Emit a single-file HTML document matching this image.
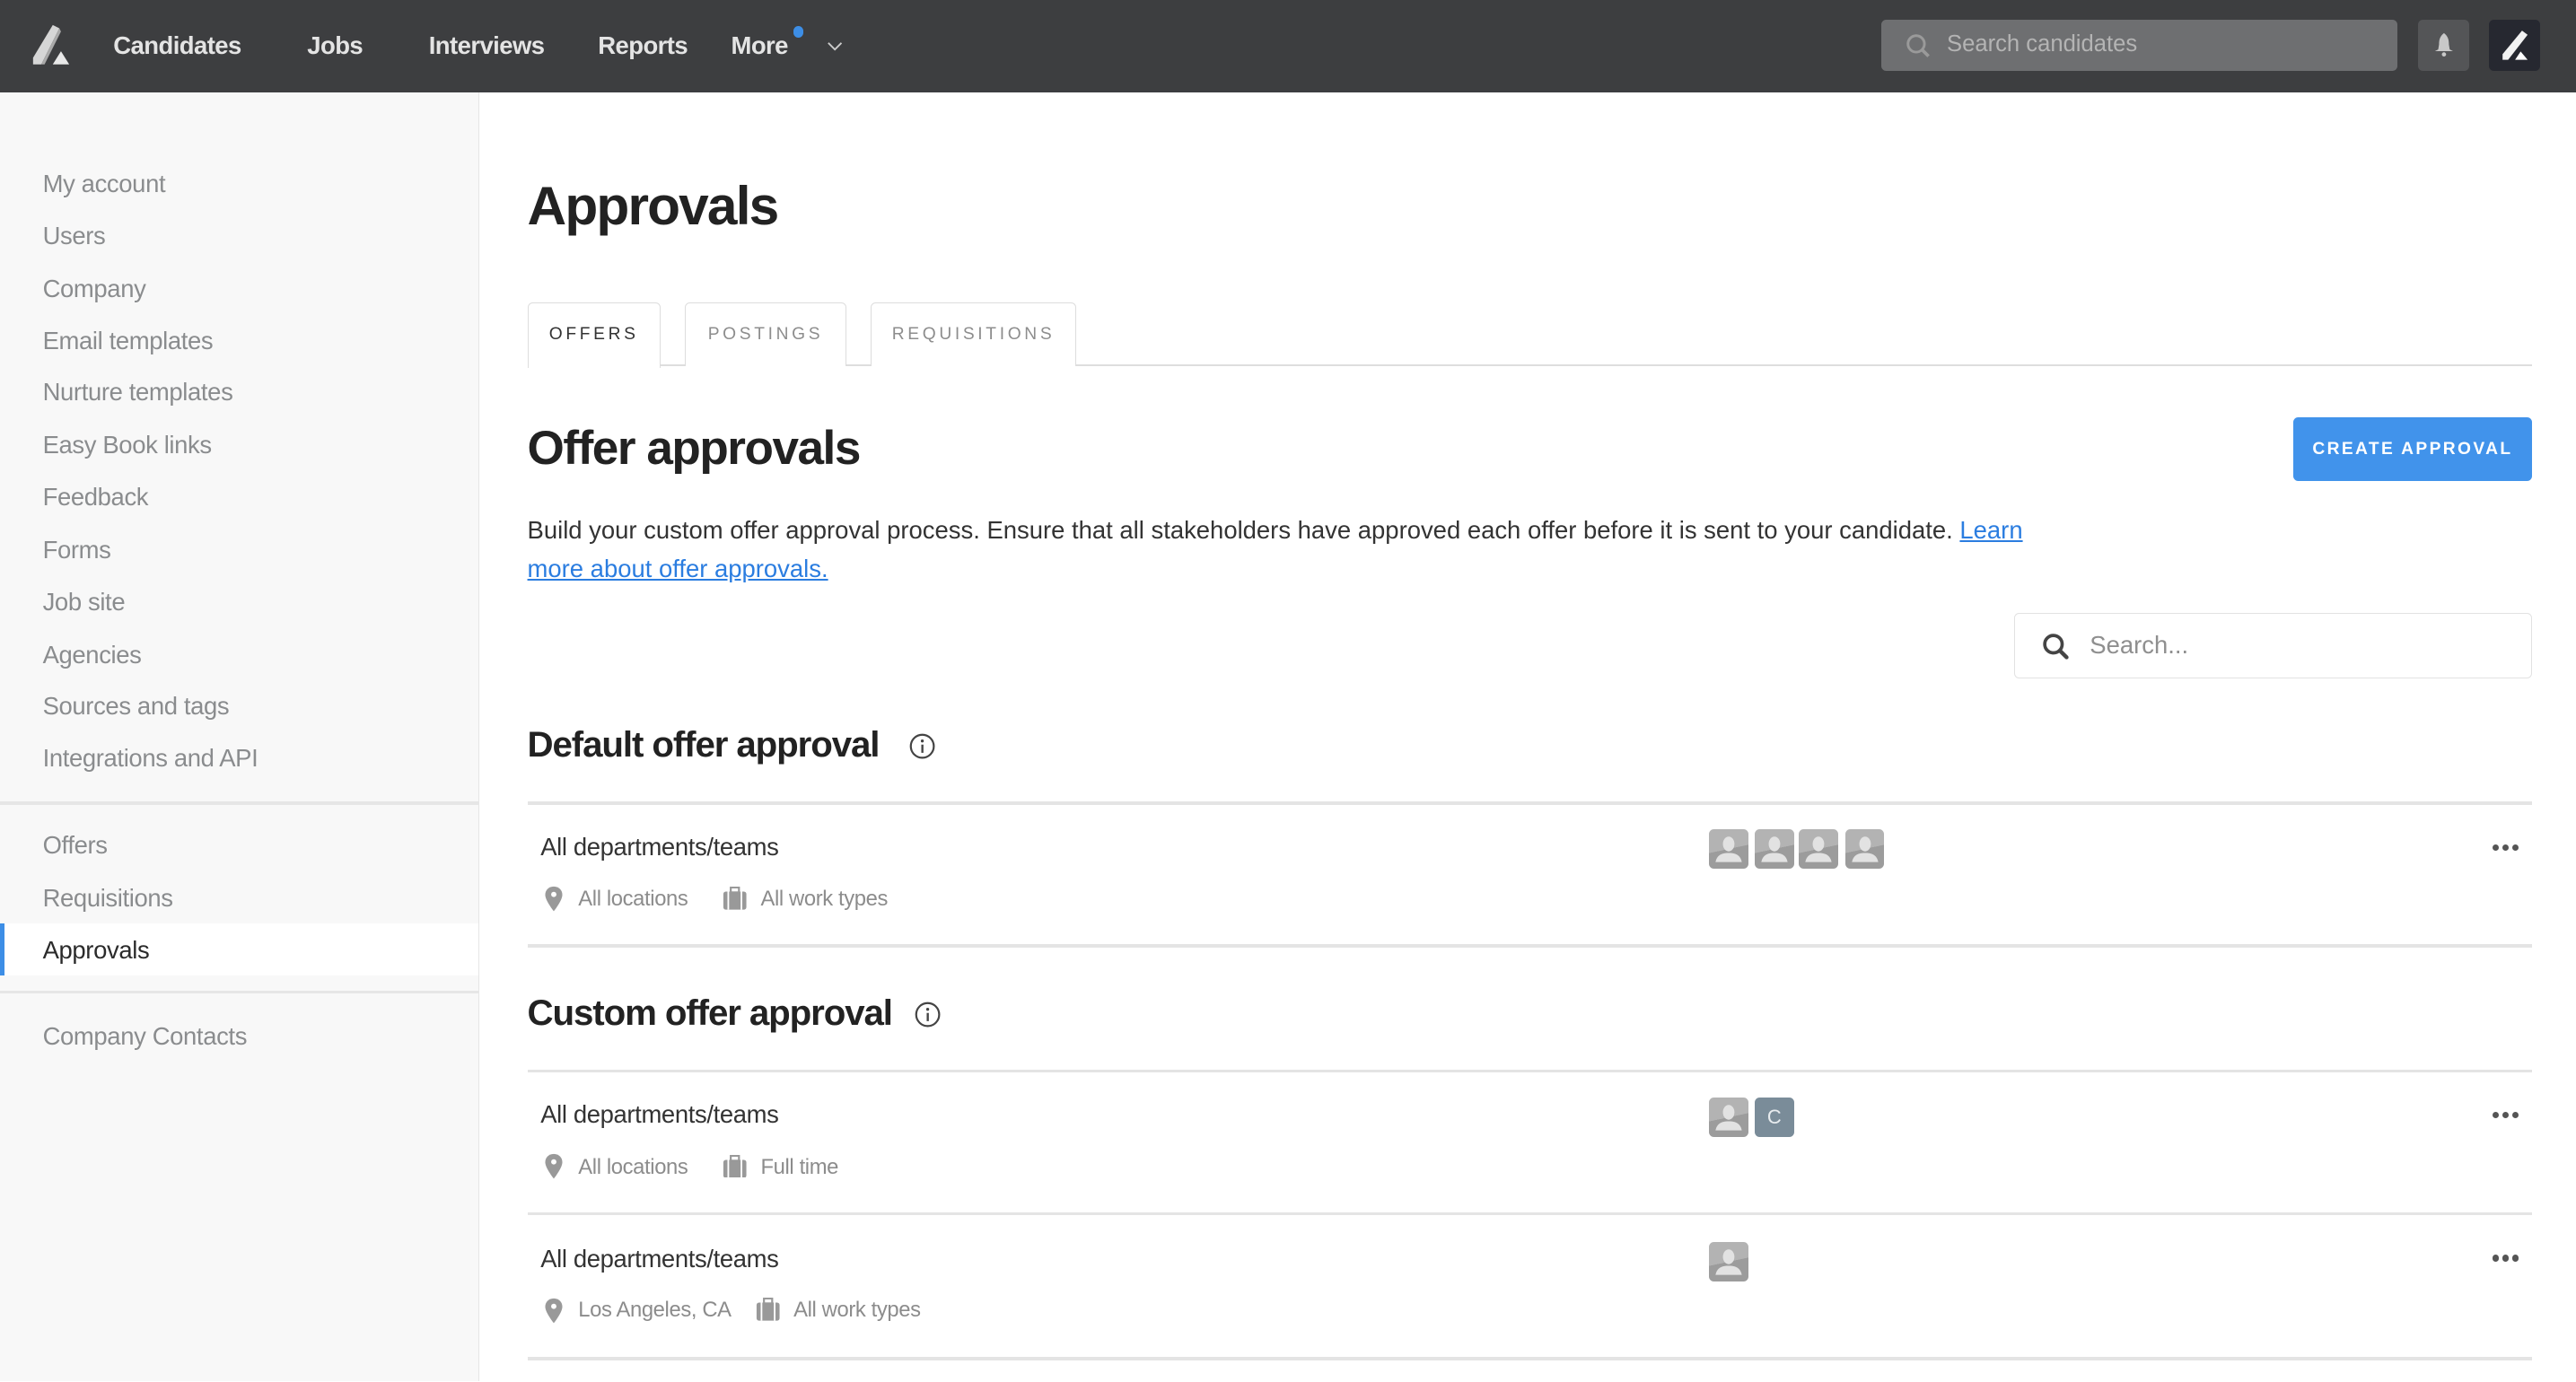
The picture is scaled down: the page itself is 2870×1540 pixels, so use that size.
<!DOCTYPE html>
<html><head><meta charset="utf-8"><style>
html{zoom:1.8304}
*{box-sizing:border-box;margin:0;padding:0}
body{width:1568px;height:841px;overflow:hidden;font-family:"Liberation Sans",sans-serif;background:#fff;position:relative;color:#222}
.a{position:absolute;white-space:nowrap}
#top{position:absolute;left:0;top:0;width:1568px;height:56px;background:#3d3e40}
.nav{position:absolute;top:19px;font-size:15px;font-weight:bold;color:#e4e4e4;letter-spacing:-0.3px}
#side{position:absolute;left:0;top:56px;width:292px;height:785px;background:#f8f8f8;border-right:1px solid #e6e6e6}
.si{position:absolute;left:26px;font-size:15px;color:#8a8c8e;letter-spacing:-0.2px}
.hr{position:absolute;height:1px;background:#dedede}
.tab{position:absolute;top:184px;height:39px;border:1px solid #ddd;border-bottom:none;border-radius:3px 3px 0 0;font-size:10.5px;letter-spacing:2px;color:#8d8d8d;text-align:center;line-height:38px;background:#fff}
.row{font-size:15px;color:#333;letter-spacing:-0.2px}
.meta{font-size:13px;color:#8c8c8c;letter-spacing:-0.2px}
.av{position:absolute;width:24px;height:24px;border-radius:3px;background:linear-gradient(168deg,#b3b3b3 50%,#9c9c9c 50%);overflow:hidden}
.av svg{position:absolute;left:0;top:0}
.dots{position:absolute;font-size:0}
.dots i{display:inline-block;width:4px;height:4px;border-radius:2px;background:#555;margin-right:2px}
</style></head><body>
<div id="top">
<svg class="a" style="left:19px;top:14px" width="26" height="26" viewBox="0 0 26 26"><path d="M13 1 L17 3 L6 25 L1 25 L1 21 Z" fill="#d6d6d6"/><path d="M17 3 L6 25 L8 25 L18 5 Z" fill="#aaa"/><path d="M18 17 L23 25 L13 25 Z" fill="#e8e8e8"/></svg>
<div class="nav" style="left:69px">Candidates</div>
<div class="nav" style="left:187px">Jobs</div>
<div class="nav" style="left:261px">Interviews</div>
<div class="nav" style="left:364px">Reports</div>
<div class="nav" style="left:445px">More</div>
<div class="a" style="left:483px;top:16px;width:6px;height:7px;border-radius:3px;background:#3d8ee6"></div>
<svg class="a" style="left:503px;top:25px" width="10" height="7"><path d="M1 1 L5 5 L9 1" stroke="#ccc" fill="none" stroke-width="1"/></svg>
<div class="a" style="left:1145px;top:12px;width:314px;height:31px;background:#6e6f71;border-radius:3px"></div>
<svg class="a" style="left:1160px;top:20px" width="16" height="16"><circle cx="6.5" cy="6.5" r="5" stroke="#9a9a9a" stroke-width="1.6" fill="none"/><path d="M10 10 L14 14" stroke="#9a9a9a" stroke-width="2"/></svg>
<div class="a" style="left:1185px;top:19px;font-size:14px;color:#b4b4b4">Search candidates</div>
<div class="a" style="left:1472px;top:12px;width:31px;height:31px;background:#545557;border-radius:3px"></div>
<svg class="a" style="left:1481px;top:19px" width="13" height="16"><path d="M6.5 1 C4 3 3.5 5 3.5 8 L3 11 L1 12 L12 12 L10 11 L9.5 8 C9.5 5 9 3 6.5 1Z" fill="#c8c8c8"/><circle cx="6.5" cy="14" r="1.3" fill="#c8c8c8"/></svg>
<div class="a" style="left:1515px;top:12px;width:31px;height:31px;background:#262830;border-radius:3px"></div>
<svg class="a" style="left:1520px;top:17px" width="22" height="22" viewBox="0 0 26 26"><path d="M18 2 L22 5 L8 23 L4 23 L4 19 Z" fill="#f2f2f2"/><path d="M17 17 L22 23 L13 23 Z" fill="#fff"/></svg>
</div>
<div id="side">
<div class="si" style="top:47px">My account</div>
<div class="si" style="top:79px">Users</div>
<div class="si" style="top:111px">Company</div>
<div class="si" style="top:143px">Email templates</div>
<div class="si" style="top:174px">Nurture templates</div>
<div class="si" style="top:206px">Easy Book links</div>
<div class="si" style="top:238px">Feedback</div>
<div class="si" style="top:270px">Forms</div>
<div class="si" style="top:302px">Job site</div>
<div class="si" style="top:334px">Agencies</div>
<div class="si" style="top:365px">Sources and tags</div>
<div class="si" style="top:397px">Integrations and API</div>
<div class="hr" style="left:0;top:432px;width:291px;height:2px;background:#e6e6e6"></div>
<div class="si" style="top:450px">Offers</div>
<div class="si" style="top:482px">Requisitions</div>
<div class="a" style="left:0;top:506px;width:291px;height:32px;background:#fff;border-left:3px solid #3d8ee6"></div>
<div class="si" style="top:514px;color:#2b2b2b">Approvals</div>
<div class="hr" style="left:0;top:547px;width:291px;height:2px;background:#e6e6e6"></div>
<div class="si" style="top:566px">Company Contacts</div>
</div>

<div class="a" style="left:321px;top:106px;font-size:33px;font-weight:bold;color:#222;letter-spacing:-1px">Approvals</div>
<div class="hr" style="left:321px;top:222px;width:1220px"></div>
<div class="tab" style="left:321px;width:81px;color:#333;height:40px">OFFERS</div>
<div class="tab" style="left:417px;width:98px">POSTINGS</div>
<div class="tab" style="left:530px;width:125px">REQUISITIONS</div>

<div class="a" style="left:321px;top:256px;font-size:29px;font-weight:bold;color:#222;letter-spacing:-0.8px">Offer approvals</div>
<div class="a" style="left:1396px;top:254px;width:145px;height:39px;background:#4193eb;border-radius:3px;color:#fff;font-size:10.5px;font-weight:bold;letter-spacing:1.3px;text-align:center;line-height:39px">CREATE APPROVAL</div>
<div class="a" style="left:321px;top:311px;font-size:15px;color:#333;line-height:23.5px;letter-spacing:0px">Build your custom offer approval process. Ensure that all stakeholders have approved each offer before it is sent to your candidate. <span style="color:#2b7de0;text-decoration:underline">Learn</span><br><span style="color:#2b7de0;text-decoration:underline">more about offer approvals.</span></div>
<div class="a" style="left:1226px;top:373px;width:315px;height:40px;border:1px solid #e2e2e2;border-radius:3px"></div>
<svg class="a" style="left:1243px;top:385px" width="17" height="17"><circle cx="7" cy="7" r="5.3" stroke="#444" stroke-width="2" fill="none"/><path d="M11 11 L15 15" stroke="#444" stroke-width="2.4" stroke-linecap="round"/></svg>
<div class="a" style="left:1272px;top:384px;font-size:15px;color:#8f8f8f">Search...</div>

<div class="a" style="left:321px;top:441px;font-size:22px;font-weight:bold;color:#222;letter-spacing:-0.6px">Default offer approval</div>
<svg class="a" style="left:553px;top:446px" width="17" height="17"><circle cx="8.5" cy="8.5" r="7" stroke="#444" fill="none" stroke-width="1.2"/><rect x="7.9" y="7.5" width="1.3" height="5" fill="#444"/><circle cx="8.5" cy="5.3" r="0.9" fill="#444"/></svg>
<div class="hr" style="left:321px;top:488px;width:1220px;height:2px;background:#e4e4e4"></div>
<div class="a row" style="left:329px;top:507px">All departments/teams</div>
<svg class="a" style="left:331px;top:539px" width="12" height="16"><path d="M6 0.5 C2.8 0.5 0.8 2.8 0.8 5.5 C0.8 9 6 15.5 6 15.5 C6 15.5 11.2 9 11.2 5.5 C11.2 2.8 9.2 0.5 6 0.5Z" fill="#999"/><circle cx="6" cy="5.3" r="1.6" fill="#fff"/></svg>
<div class="a meta" style="left:352px;top:540px">All locations</div>
<svg class="a" style="left:440px;top:540px" width="15" height="14"><rect x="0.5" y="3" width="14" height="11" rx="1.5" fill="#999"/><rect x="5" y="0.5" width="5" height="3" fill="none" stroke="#999" stroke-width="1.2"/><rect x="3" y="3" width="1" height="11" fill="#fff"/><rect x="11" y="3" width="1" height="11" fill="#fff"/></svg>
<div class="a meta" style="left:463px;top:540px">All work types</div>
<div class="dots" style="left:1517px;top:514px"><i></i><i></i><i></i></div>

<div class="a" style="left:321px;top:604px;font-size:22px;font-weight:bold;color:#222;letter-spacing:-0.6px">Custom offer approval</div>
<svg class="a" style="left:556px;top:609px" width="17" height="17"><circle cx="8.5" cy="8.5" r="7" stroke="#444" fill="none" stroke-width="1.2"/><rect x="7.9" y="7.5" width="1.3" height="5" fill="#444"/><circle cx="8.5" cy="5.3" r="0.9" fill="#444"/></svg>
<div class="hr" style="left:321px;top:575px;width:1220px;height:2px;background:#e4e4e4"></div>
<div class="hr" style="left:321px;top:651px;width:1220px;height:2px;background:#e4e4e4"></div>
<div class="a row" style="left:329px;top:670px">All departments/teams</div>
<svg class="a" style="left:331px;top:702px" width="12" height="16"><path d="M6 0.5 C2.8 0.5 0.8 2.8 0.8 5.5 C0.8 9 6 15.5 6 15.5 C6 15.5 11.2 9 11.2 5.5 C11.2 2.8 9.2 0.5 6 0.5Z" fill="#999"/><circle cx="6" cy="5.3" r="1.6" fill="#fff"/></svg>
<div class="a meta" style="left:352px;top:703px">All locations</div>
<svg class="a" style="left:440px;top:703px" width="15" height="14"><rect x="0.5" y="3" width="14" height="11" rx="1.5" fill="#999"/><rect x="5" y="0.5" width="5" height="3" fill="none" stroke="#999" stroke-width="1.2"/><rect x="3" y="3" width="1" height="11" fill="#fff"/><rect x="11" y="3" width="1" height="11" fill="#fff"/></svg>
<div class="a meta" style="left:463px;top:703px">Full time</div>
<div class="dots" style="left:1517px;top:677px"><i></i><i></i><i></i></div>
<div class="hr" style="left:321px;top:738px;width:1220px;height:2px;background:#e4e4e4"></div>
<div class="a row" style="left:329px;top:758px">All departments/teams</div>
<svg class="a" style="left:331px;top:790px" width="12" height="16"><path d="M6 0.5 C2.8 0.5 0.8 2.8 0.8 5.5 C0.8 9 6 15.5 6 15.5 C6 15.5 11.2 9 11.2 5.5 C11.2 2.8 9.2 0.5 6 0.5Z" fill="#999"/><circle cx="6" cy="5.3" r="1.6" fill="#fff"/></svg>
<div class="a meta" style="left:352px;top:790px">Los Angeles, CA</div>
<svg class="a" style="left:460px;top:790px" width="15" height="14"><rect x="0.5" y="3" width="14" height="11" rx="1.5" fill="#999"/><rect x="5" y="0.5" width="5" height="3" fill="none" stroke="#999" stroke-width="1.2"/><rect x="3" y="3" width="1" height="11" fill="#fff"/><rect x="11" y="3" width="1" height="11" fill="#fff"/></svg>
<div class="a meta" style="left:483px;top:790px">All work types</div>
<div class="dots" style="left:1517px;top:764px"><i></i><i></i><i></i></div>
<div class="hr" style="left:321px;top:826px;width:1220px;height:2px;background:#e4e4e4"></div>

<div class="av" style="left:1040px;top:505px"><svg width="24" height="24"><ellipse cx="12" cy="9" rx="3.5" ry="4.5" fill="#e2e2e2"/><path d="M4 20 C5 15 9 14.5 12 14.5 C15 14.5 19 15 20 20Z" fill="#e2e2e2"/></svg></div>
<div class="av" style="left:1068px;top:505px"><svg width="24" height="24"><ellipse cx="12" cy="9" rx="3.5" ry="4.5" fill="#e2e2e2"/><path d="M4 20 C5 15 9 14.5 12 14.5 C15 14.5 19 15 20 20Z" fill="#e2e2e2"/></svg></div>
<div class="av" style="left:1095px;top:505px"><svg width="24" height="24"><ellipse cx="12" cy="9" rx="3.5" ry="4.5" fill="#e2e2e2"/><path d="M4 20 C5 15 9 14.5 12 14.5 C15 14.5 19 15 20 20Z" fill="#e2e2e2"/></svg></div>
<div class="av" style="left:1123px;top:505px"><svg width="24" height="24"><ellipse cx="12" cy="9" rx="3.5" ry="4.5" fill="#e2e2e2"/><path d="M4 20 C5 15 9 14.5 12 14.5 C15 14.5 19 15 20 20Z" fill="#e2e2e2"/></svg></div>
<div class="av" style="left:1040px;top:668px"><svg width="24" height="24"><ellipse cx="12" cy="9" rx="3.5" ry="4.5" fill="#e2e2e2"/><path d="M4 20 C5 15 9 14.5 12 14.5 C15 14.5 19 15 20 20Z" fill="#e2e2e2"/></svg></div>
<div class="a" style="left:1068px;top:668px;width:24px;height:24px;border-radius:3px;background:#7a8c99;color:#e8ecef;font-size:12px;text-align:center;line-height:24px">C</div>
<div class="av" style="left:1040px;top:756px"><svg width="24" height="24"><ellipse cx="12" cy="9" rx="3.5" ry="4.5" fill="#e2e2e2"/><path d="M4 20 C5 15 9 14.5 12 14.5 C15 14.5 19 15 20 20Z" fill="#e2e2e2"/></svg></div>
</body></html>
